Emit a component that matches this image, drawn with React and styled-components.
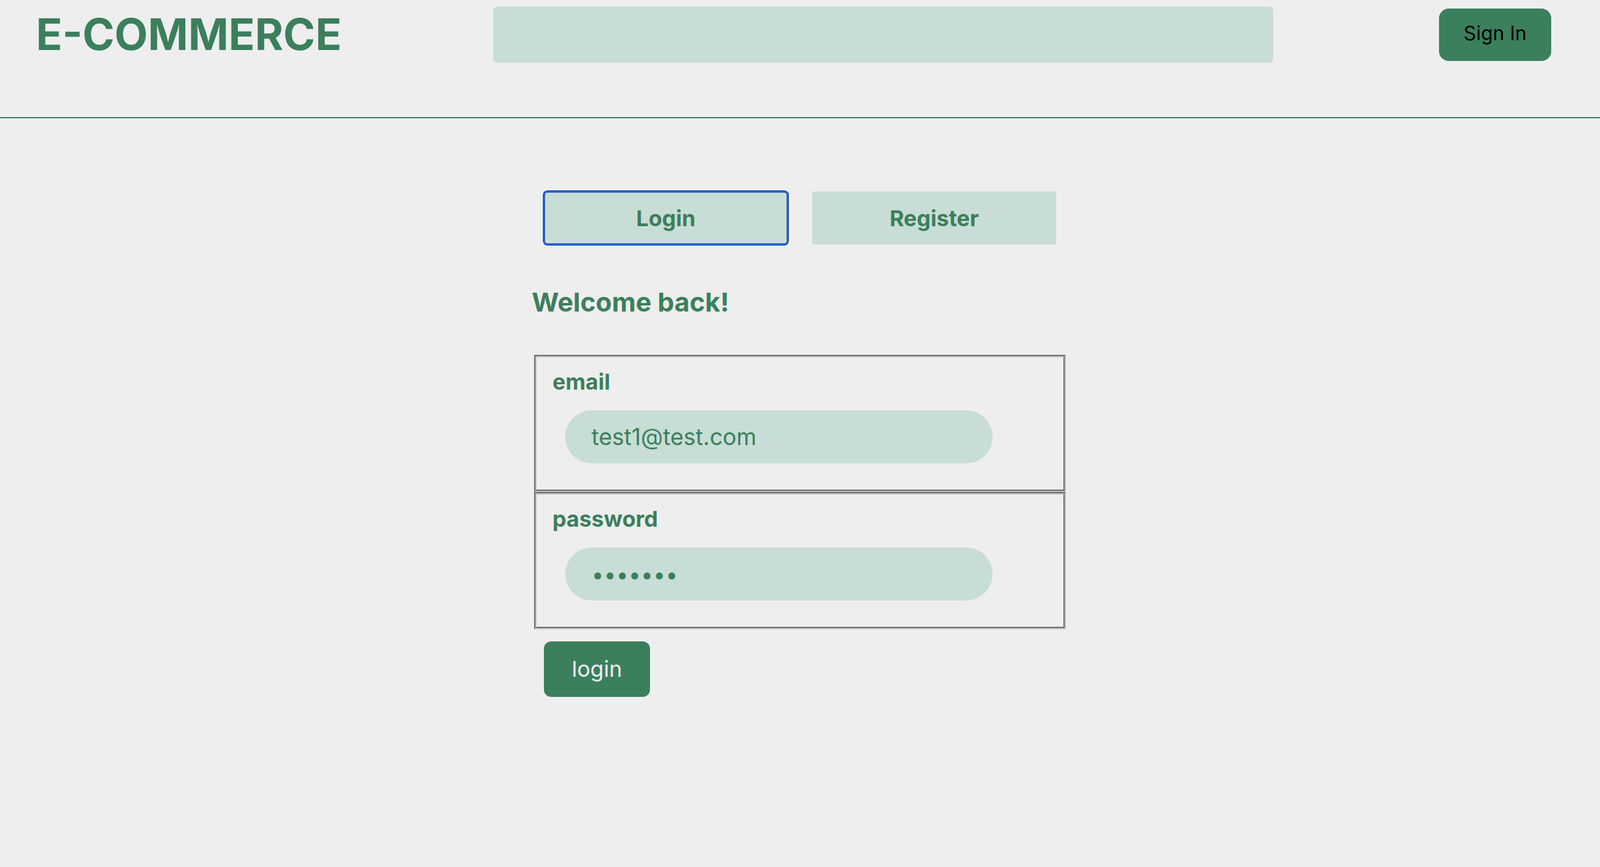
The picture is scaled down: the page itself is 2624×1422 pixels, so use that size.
import React, { useState } from 'react';
import styled, { createGlobalStyle } from 'styled-components';

const green = '#3b7f5c';
const mint = '#c8ddd5';
const paper = '#eeeeee';

const GlobalStyle = createGlobalStyle`
    html, body {
        margin: 0;
        background: ${paper};
    }
    body {
        font-family: Inter, "Noto Sans", sans-serif;
        min-height: 100vh;
    }
    * {
        box-sizing: border-box;
    }
`

const Header = styled.header`
    height: 194px;
    padding: 11px 80px 0 59px;
    border-bottom: 2px solid ${green};
`
const Bar = styled.div`
    height: 92px;
    display: flex;
    align-items: center;
`
const Brand = styled.h1`
    width: 750px;
    margin: -3px 0 0;
    font-size: 71px;
    font-weight: 700;
    color: ${green};
    line-height: normal;
`
const Search = styled.input`
    width: 1279px;
    height: 92px;
    border: none;
    border-radius: 6px;
    background: ${mint};
    padding: 0 24px;
    font: inherit;
    font-size: 32px;
    outline: none;
`
const SignIn = styled.button`
    margin-left: auto;
    width: 184px;
    height: 86px;
    padding: 0 0 5px;
    border: none;
    border-radius: 16px;
    background: ${green};
    color: #000;
    font-family: Inter, sans-serif;
    font-size: 32px;
    cursor: pointer;
`

const Main = styled.main`
    width: 880px;
    margin: 0 auto;
    padding-top: 120px;
`
const Tabs = styled.div`
    display: flex;
    gap: 40px;
    padding-left: 20px;
`
const Tab = styled.button`
    width: 400px;
    height: 87px;
    border: none;
    border-radius: ${p => (p.$active ? '6px' : '0')};
    background: ${mint};
    color: ${green};
    font-family: Inter, sans-serif;
    font-size: 36px;
    font-weight: 700;
    cursor: pointer;
    outline: ${p => (p.$active ? '4px solid #2a5fc8' : 'none')};
    outline-offset: -2px;
    box-shadow: ${p => (p.$active ? '0 0 0 4px #ffffff' : 'none')};
`
const Welcome = styled.h2`
    margin: 68px 0 61px;
    font-size: 43px;
    font-weight: 700;
    line-height: normal;
    color: ${green};
`
const Field = styled.fieldset`
    margin: 0 4px;
    padding: 18px 0 43px 26px;
    border: 4px groove #c0c0c0;
`
const Label = styled.label`
    display: block;
    font-size: 36px;
    font-weight: 700;
    color: ${green};
    margin-bottom: 25px;
`
const Pill = styled.input`
    display: block;
    width: 701px;
    height: 87px;
    margin-left: 21px;
    padding: 0 43px;
    border: none;
    border-radius: 44px;
    background: ${mint};
    color: ${green};
    font-family: Inter, sans-serif;
    font-size: ${p => (p.type === 'password' ? '36px' : '37.5px')};
    outline: none;
`
const Submit = styled.button`
    margin: 20px 0 0 20px;
    width: 174px;
    height: 91px;
    padding: 0 0 2px;
    border: none;
    border-radius: 12px;
    background: ${green};
    color: ${paper};
    font-family: Inter, sans-serif;
    font-size: 36px;
    cursor: pointer;
`

function App() {
    const [tab, setTab] = useState('login');
    const [email, setEmail] = useState('test1@test.com');
    const [password, setPassword] = useState('1234567');

    return (
        <>
            <GlobalStyle />
            <Header>
                <Bar>
                    <Brand>E-COMMERCE</Brand>
                    <Search aria-label='search' />
                    <SignIn>Sign In</SignIn>
                </Bar>
            </Header>
            <Main>
                <Tabs>
                    <Tab $active={tab === 'login'} onClick={() => setTab('login')}>Login</Tab>
                    <Tab $active={tab === 'register'} onClick={() => setTab('register')}>Register</Tab>
                </Tabs>
                <Welcome>Welcome back!</Welcome>
                <form onSubmit={e => e.preventDefault()}>
                    <Field>
                        <Label htmlFor='email'>email</Label>
                        <Pill id='email' value={email} onChange={e => setEmail(e.target.value)} />
                    </Field>
                    <Field>
                        <Label htmlFor='password'>password</Label>
                        <Pill id='password' type='password' value={password} onChange={e => setPassword(e.target.value)} />
                    </Field>
                    <Submit type='submit'>login</Submit>
                </form>
            </Main>
        </>
    )
}

export default App
